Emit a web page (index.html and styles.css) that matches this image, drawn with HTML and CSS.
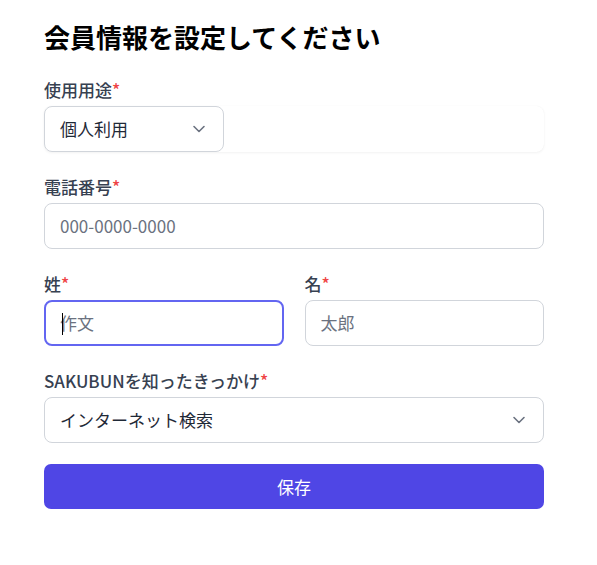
FILE: index.html
```html
<!DOCTYPE html>
<html lang="ja">
<head>
<meta charset="utf-8">
<title>会員情報を設定してください</title>
<link rel="stylesheet" href="styles.css">
</head>
<body>
<main class="page">
  <h1 class="title">会員情報を設定してください</h1>
  <form class="form">
    <div class="field">
      <label class="label">使用用途<span class="req">*</span></label>
      <div class="select-wrap">
        <div class="select select-small">
          <span class="value">個人利用</span>
          <svg class="chev" viewBox="0 0 20 20" width="20" height="20"><path d="M5 7.5l5 5 5-5" fill="none" stroke="#6b7280" stroke-width="1.6" stroke-linecap="round" stroke-linejoin="round"/></svg>
        </div>
      </div>
    </div>
    <div class="field">
      <label class="label">電話番号<span class="req">*</span></label>
      <div class="input"><span class="ph">000-0000-0000</span></div>
    </div>
    <div class="row">
      <div class="field">
        <label class="label">姓<span class="req">*</span></label>
        <div class="input focused"><span class="caret"></span><span class="ph">作文</span></div>
      </div>
      <div class="field">
        <label class="label">名<span class="req">*</span></label>
        <div class="input"><span class="ph">太郎</span></div>
      </div>
    </div>
    <div class="field">
      <label class="label">SAKUBUNを知ったきっかけ<span class="req">*</span></label>
      <div class="select">
        <span class="value">インターネット検索</span>
        <svg class="chev" viewBox="0 0 20 20" width="20" height="20"><path d="M5 7.5l5 5 5-5" fill="none" stroke="#6b7280" stroke-width="1.6" stroke-linecap="round" stroke-linejoin="round"/></svg>
      </div>
    </div>
    <button type="button" class="btn">保存</button>
  </form>
</main>
</body>
</html>
```

FILE: styles.css
```css
* { box-sizing: border-box; }
html, body { margin: 0; padding: 0; background: #fff; }
body {
  font-family: "Noto Sans CJK JP", "Noto Sans", sans-serif;
  color: #111827;
}
.page {
  width: 500px;
  margin-left: 44px;
  padding-top: 19px;
}
.title {
  margin: 0;
  font-size: 26px;
  line-height: 36px;
  font-weight: 700;
  color: #000;
}
.form {
  margin-top: 23px;
  display: flex;
  flex-direction: column;
  gap: 23px;
}
.field {
  display: flex;
  flex-direction: column;
  gap: 4px;
}
.label {
  font-size: 17px;
  line-height: 24px;
  font-weight: 500;
  color: #374151;
}
.req { color: #ef4444; }
.row {
  display: grid;
  grid-template-columns: 1fr 1fr;
  gap: 21px;
}
.select-wrap {
  border-radius: 8px;
  box-shadow: 0 1px 3px rgba(0,0,0,0.05), 0 0 1px rgba(0,0,0,0.06);
}
.select, .input {
  position: relative;
  height: 46px;
  border: 1px solid #d1d5db;
  border-radius: 8px;
  background: #fff;
  padding: 0 15px;
  display: flex;
  align-items: center;
  font-size: 17px;
  line-height: 24px;
}
.select { justify-content: space-between; padding-right: 14px; }
.select-small { width: 180px; }
.value { color: #1f2937; }
.ph { color: #6b7280; }
.chev { display: block; flex: none; }
.input.focused {
  border: 2px solid #6366f1;
  padding-left: 14px;
}
.caret {
  position: absolute;
  left: 16px;
  top: 11px;
  width: 1px;
  height: 22px;
  background: #000;
}
.btn {
  margin-top: -2px;
  height: 45px;
  border: none;
  border-radius: 7px;
  background: #4f46e5;
  color: #fff;
  font-family: inherit;
  font-size: 17px;
  line-height: 24px;
}
```
